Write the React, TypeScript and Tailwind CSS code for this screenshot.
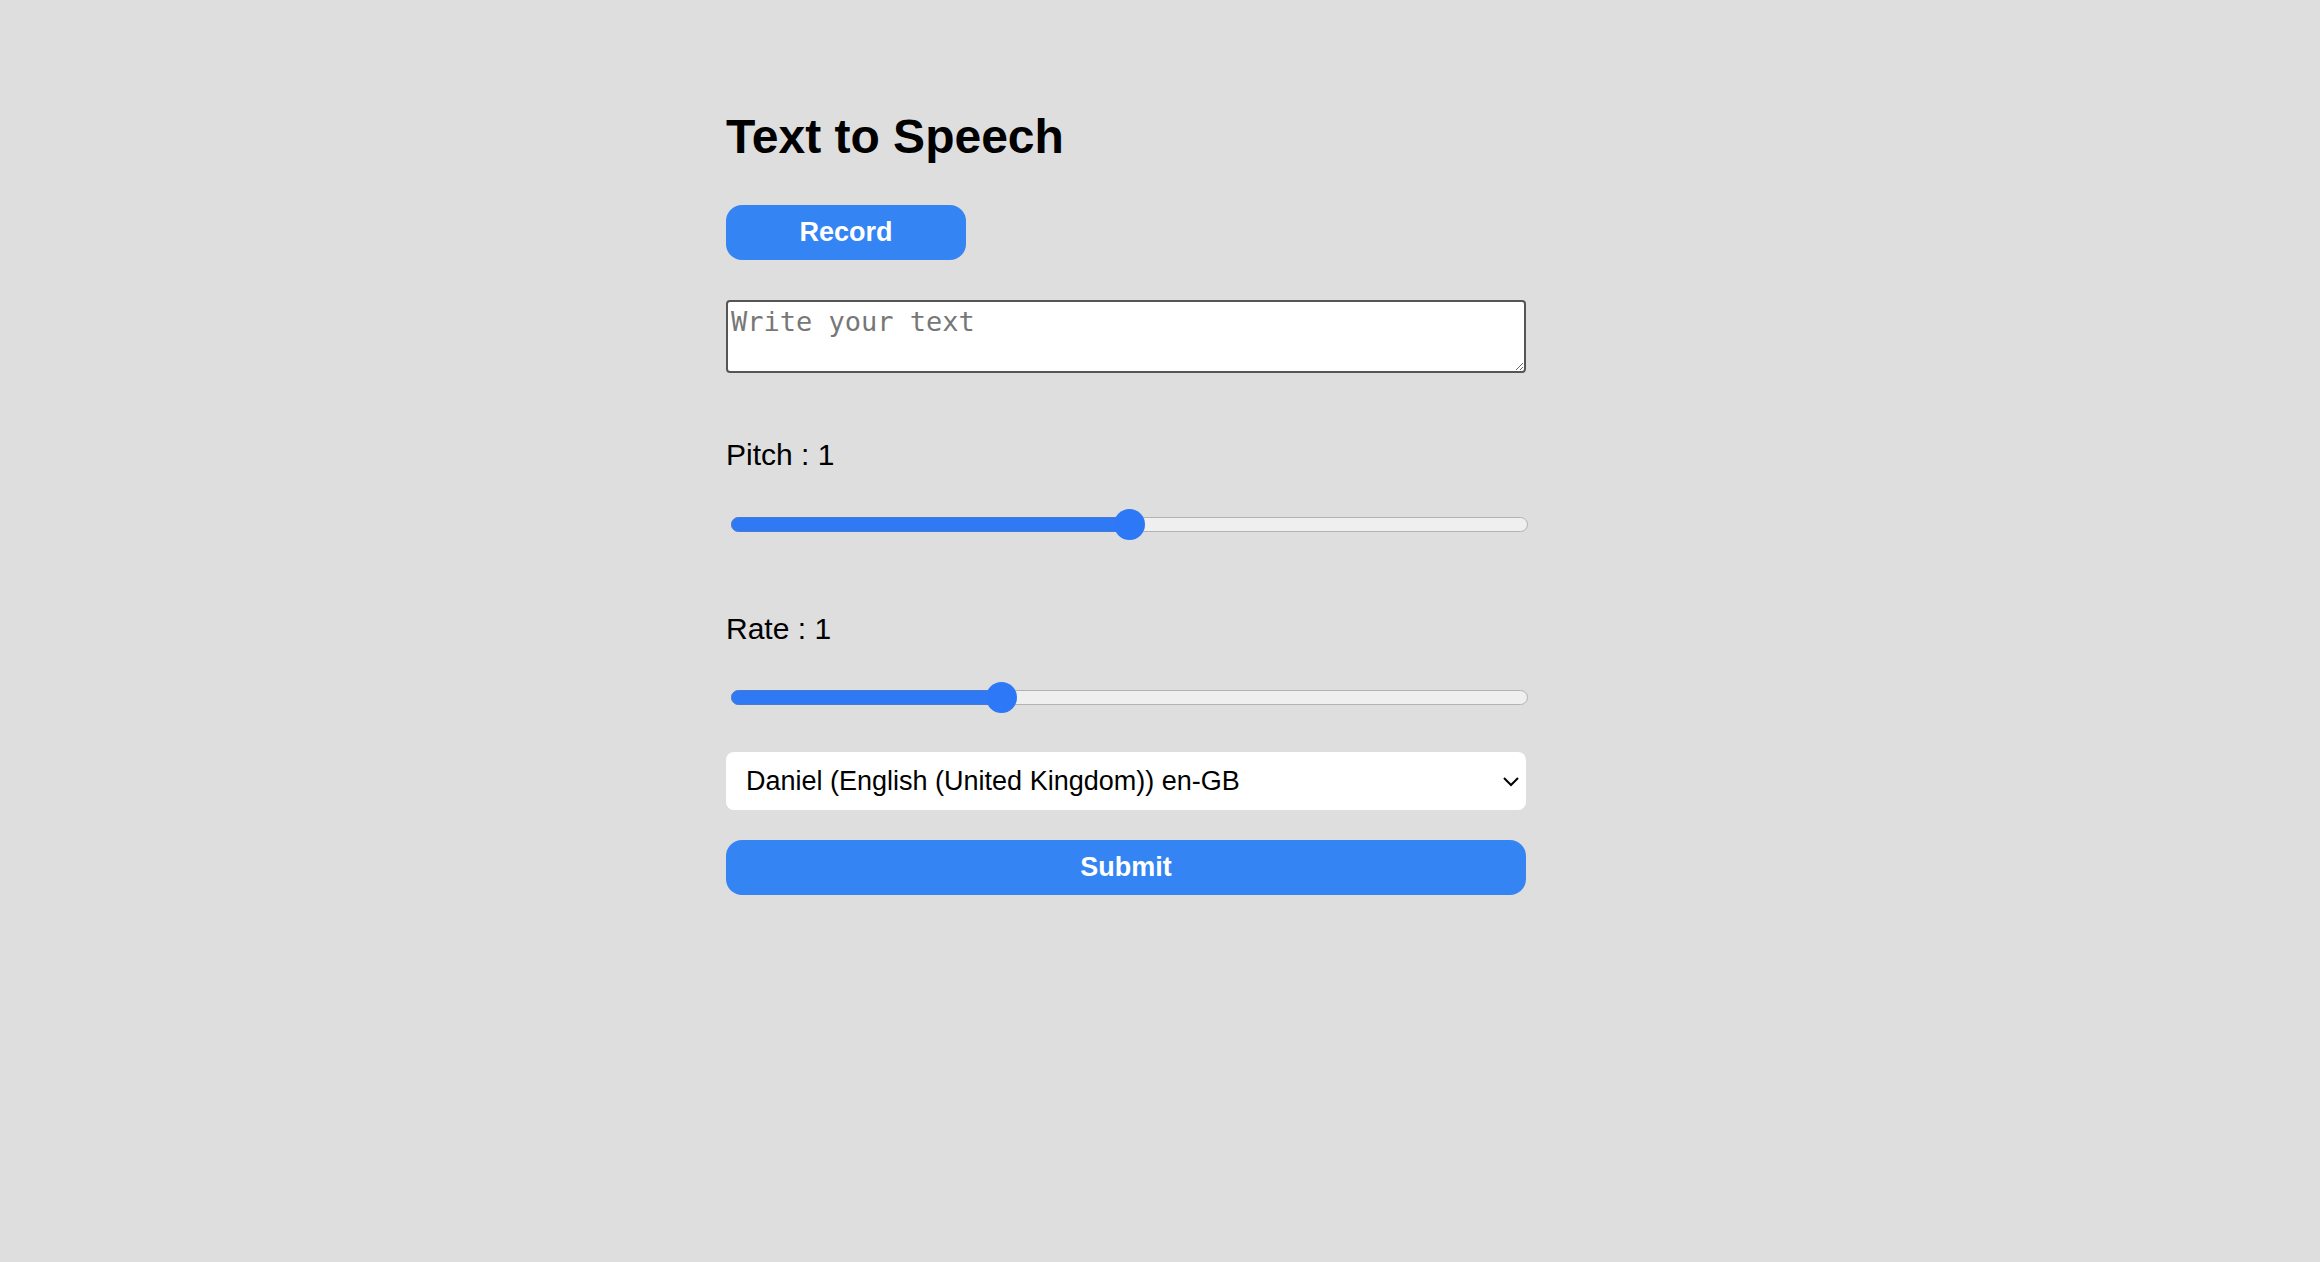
import { useState } from 'react'

interface SliderProps {
  value: number
  min: number
  max: number
  step: number
  onChange: (v: number) => void
}

// track is 797 wide, thumb 31 → thumb travel 766
function Slider({ value, min, max, step, onChange }: SliderProps) {
  const f = (value - min) / (max - min)
  return (
    <div className="relative ml-[5px] h-[31px] w-[797px]">
      <div className="absolute inset-x-0 top-[8px] h-[15px] rounded-full border border-[#b2b2b2] bg-[#efefef]" />
      <div
        className="absolute left-0 top-[8px] h-[15px] rounded-l-full border border-[#4a7ad0] bg-[#2f79f5]"
        style={{ width: 15.5 + f * 766 }}
      />
      <div
        className="absolute top-0 h-[31px] w-[31px] rounded-full bg-[#2d78f6]"
        style={{ left: f * 766 }}
      />
      <input
        type="range"
        min={min}
        max={max}
        step={step}
        value={value}
        onChange={(e) => onChange(parseFloat(e.target.value))}
        className="absolute inset-0 h-full w-full cursor-pointer opacity-0"
      />
    </div>
  )
}

export default function App() {
  const [text, setText] = useState('')
  const [pitch, setPitch] = useState(1)
  const [rate, setRate] = useState(1)

  return (
    <div className="min-h-screen bg-[#dedede] text-black [font-family:'Liberation_Sans',Arial,sans-serif]">
      <div className="mx-auto w-[868px] pt-[113px]">
        <h1 className="text-[48px] font-bold leading-[48px]">Text to Speech</h1>

        <button className="mt-[44px] block h-[55px] w-[240px] rounded-[16px] bg-[#3584f4] text-[27px] font-bold text-white">
          Record
        </button>

        <textarea
          value={text}
          onChange={(e) => setText(e.target.value)}
          placeholder="Write your text"
          className="mt-[40px] block h-[73px] w-[800px] rounded-[4px] border-2 border-[#555] bg-white px-[3px] py-[4px] text-[27px] leading-[32px] outline-none [font-family:'DejaVu_Sans_Mono',monospace] placeholder:text-[#777]"
        />

        <p className="mt-[64px] text-[30px] leading-[36px]">Pitch : {pitch}</p>
        <div className="mt-[36px]">
          <Slider value={pitch} min={0} max={2} step={0.1} onChange={setPitch} />
        </div>

        <p className="mt-[71px] text-[30px] leading-[36px]">Rate : {rate}</p>
        <div className="mt-[35px]">
          <Slider value={rate} min={0.5} max={2} step={0.1} onChange={setRate} />
        </div>

        <div className="relative mt-[39px] h-[58px] w-[800px]">
          <select className="h-full w-full appearance-none rounded-[8px] bg-white pl-[20px] text-[27px] text-black outline-none">
            <option>Daniel (English (United Kingdom)) en-GB</option>
          </select>
          <svg
            className="pointer-events-none absolute right-[7px] top-[25px] h-[10px] w-[16px]"
            viewBox="0 0 16 10"
            fill="none"
            stroke="black"
            strokeWidth={2}
          >
            <path d="M1 1l7 7 7-7" />
          </svg>
        </div>

        <button className="mt-[30px] block h-[55px] w-[800px] rounded-[16px] bg-[#3584f4] text-[27px] font-bold text-white">
          Submit
        </button>
      </div>
    </div>
  )
}
